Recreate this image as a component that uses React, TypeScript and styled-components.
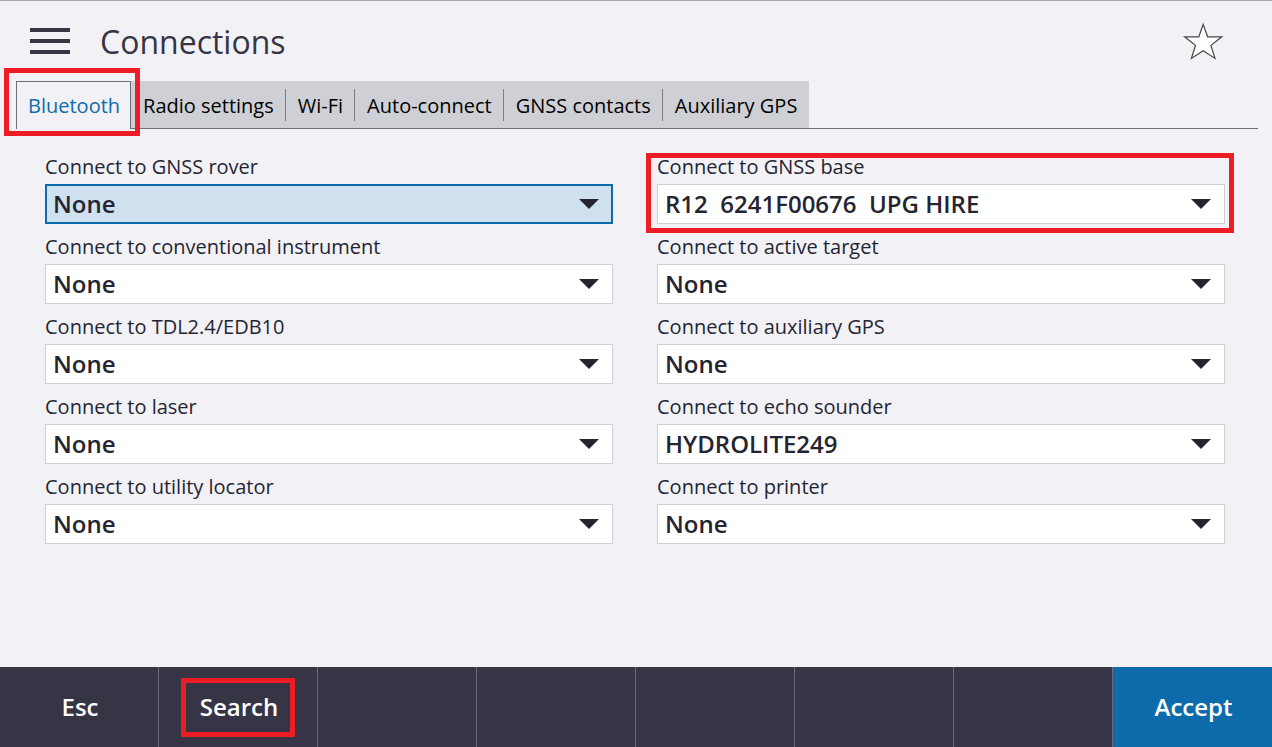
import React, { useId, useState } from "react";
import styled, { createGlobalStyle, css } from "styled-components";

const ink = "#363545";
const line = "#6e6d7a";
const blue = "#0e6bab";
const red = "#ee1c25";

const GlobalStyle = createGlobalStyle`
  * { box-sizing: border-box; }
  html, body, #root { height: 100%; }
  body {
    margin: 0;
    background: #f2f1f6;
    color: #252532;
    font-family: "Open Sans", "Noto Sans", sans-serif;
  }
  button, select { font: inherit; color: inherit; }
`;

const Page = styled.div`
  display: flex;
  flex-direction: column;
  min-height: 100%;
  border-top: 1px solid #a9a8b3;
`;

const Header = styled.header`
  display: flex;
  align-items: center;
  gap: 30px;
  height: 80px;
  padding: 0 48px 0 30px;
`;

const IconButton = styled.button`
  display: block;
  padding: 0;
  border: 0;
  background: none;
  cursor: pointer;

  svg { display: block; }
`;

const Title = styled.h1`
  flex: 1;
  margin: 0;
  padding-top: 2px;
  color: ${ink};
  font-size: 32px;
  font-weight: 400;
  line-height: 44px;
`;

const TabStrip = styled.div`
  display: flex;
  height: 48px;
  margin: 0 14px 0 16px;
`;

const StripRest = styled.div`
  flex: 1;
  border-bottom: 1px solid ${line};
`;

const Tab = styled.button<{ $active: boolean }>`
  position: relative;
  padding: 0;
  border: 0;
  border-bottom: 1px solid ${line};
  background: #cfd0d5;
  color: #000;
  font-size: 20px;
  white-space: nowrap;
  cursor: pointer;

  ${(p) =>
    p.$active &&
    css`
      border: 1px solid ${line};
      border-bottom: 0;
      background: transparent;
      color: ${blue};
    `}
`;

const TabText = styled.span<{ $divided: boolean }>`
  display: block;
  padding: 2px 11px 0 12px;
  border-right: 1px solid ${(p) => (p.$divided ? "#7d7d86" : "transparent")};
  line-height: 30px;
`;

const ActiveText = styled.span`
  display: block;
  padding: 0 10px 0 11px;
  line-height: 30px;
`;

const Highlight = styled.span<{ $inset: string }>`
  position: absolute;
  z-index: 1;
  inset: ${(p) => p.$inset};
  border: 5px solid ${red};
  pointer-events: none;
`;

const Form = styled.main`
  display: grid;
  grid-template-columns: 1fr 1fr;
  align-content: start;
  column-gap: 44px;
  flex: 1;
  padding: 15px 47px 24px 45px;
`;

const FieldBox = styled.div`
  position: relative;
  min-width: 0;
`;

const Label = styled.label`
  display: block;
  padding-top: 6px;
  font-size: 20px;
  line-height: 34px;
`;

const SelectBox = styled.div`
  display: grid;
  grid-template-columns: 1fr 20px 14px;
  align-items: center;
`;

const Select = styled.select<{ $current: boolean }>`
  grid-area: 1 / 1 / 2 / 4;
  appearance: none;
  width: 100%;
  height: 40px;
  padding: 0 40px 2px ${(p) => (p.$current ? 6 : 7)}px;
  border: ${(p) => (p.$current ? `2px solid ${blue}` : "1px solid #cecfd5")};
  border-radius: 0;
  background: ${(p) => (p.$current ? "#cfe1ee" : "#fff")};
  font-size: 24px;
  font-weight: 600;
`;

const Arrow = styled.svg`
  grid-area: 1 / 2;
  z-index: 0;
  pointer-events: none;
  fill: #252532;
`;

const SoftKeys = styled.footer`
  display: grid;
  grid-template-columns: repeat(8, 1fr);
  height: 80px;
  background: ${ink};
`;

const SoftKey = styled.button<{ $primary?: boolean }>`
  position: relative;
  padding: 0 0 2px 2px;
  border: 0;
  border-right: ${(p) => (p.$primary ? "0" : "1px solid #6a6977")};
  background: ${(p) => (p.$primary ? blue : "transparent")};
  color: #fff;
  font-size: 24px;
  font-weight: 600;
`;

type FieldData = { label: string; value: string; marked?: boolean };

const fields: FieldData[] = [
  { label: "Connect to GNSS rover", value: "None" },
  { label: "Connect to GNSS base", value: "R12\u00a0 6241F00676\u00a0 UPG HIRE", marked: true },
  { label: "Connect to conventional instrument", value: "None" },
  { label: "Connect to active target", value: "None" },
  { label: "Connect to TDL2.4/EDB10", value: "None" },
  { label: "Connect to auxiliary GPS", value: "None" },
  { label: "Connect to laser", value: "None" },
  { label: "Connect to echo sounder", value: "HYDROLITE249" },
  { label: "Connect to utility locator", value: "None" },
  { label: "Connect to printer", value: "None" },
];

const tabs = ["Bluetooth", "Radio settings", "Wi-Fi", "Auto-connect", "GNSS contacts", "Auxiliary GPS"];

const keys = ["Esc", "Search", "", "", "", "", "", "Accept"];

function Field({ label, value, marked, current }: FieldData & { current: boolean }) {
  const id = useId();
  return (
    <FieldBox>
      <Label htmlFor={id}>{label}</Label>
      <SelectBox>
        <Select id={id} $current={current} defaultValue={value}>
          <option value={value}>{value}</option>
          {value !== "None" && <option value="None">None</option>}
        </Select>
        <Arrow width="20" height="10" viewBox="0 0 20 10" aria-hidden="true">
          <path d="M0 0H20L10 10Z" />
        </Arrow>
      </SelectBox>
      {marked && <Highlight $inset="9px -9px -9px -11px" />}
    </FieldBox>
  );
}

export default function App() {
  const [active, setActive] = useState(0);
  return (
    <>
      <GlobalStyle />
      <Page>
        <Header>
          <IconButton aria-label="Menu">
            <svg width="40" height="26" viewBox="0 0 40 26" fill={ink}>
              <path d="M0 0h40v4H0zM0 11h40v4H0zM0 22h40v4H0z" />
            </svg>
          </IconButton>
          <Title>Connections</Title>
          <IconButton aria-label="Favourite">
            <svg width="42" height="40" viewBox="0 0 42 40" fill="#fff" stroke="#444" strokeWidth="1.2">
              <path d="M21.2 3.4L25.6 15.8H39.8L28.9 24.4L33 37.4L21.2 29.7L9.4 37.4L13.5 24.4L2.6 15.8H16.8Z" />
            </svg>
          </IconButton>
        </Header>
        <TabStrip role="tablist">
          {tabs.map((name, i) => (
            <Tab
              key={name}
              role="tab"
              aria-selected={i === active}
              $active={i === active}
              onClick={() => setActive(i)}
            >
              {i === active ? (
                <ActiveText>{name}</ActiveText>
              ) : (
                <TabText $divided={i < tabs.length - 1}>{name}</TabText>
              )}
              {i === 0 && <Highlight $inset="-14px -10px -7px -13px" />}
            </Tab>
          ))}
          <StripRest />
        </TabStrip>
        <Form>
          {fields.map((field, i) => (
            <Field key={field.label} {...field} current={i === 0} />
          ))}
        </Form>
        <SoftKeys>
          {keys.map((name, i) => (
            <SoftKey key={i} $primary={name === "Accept"} aria-label={name || "Unassigned key"}>
              {name}
              {name === "Search" && <Highlight $inset="11px 22px 10px 22px" />}
            </SoftKey>
          ))}
        </SoftKeys>
      </Page>
    </>
  );
}
